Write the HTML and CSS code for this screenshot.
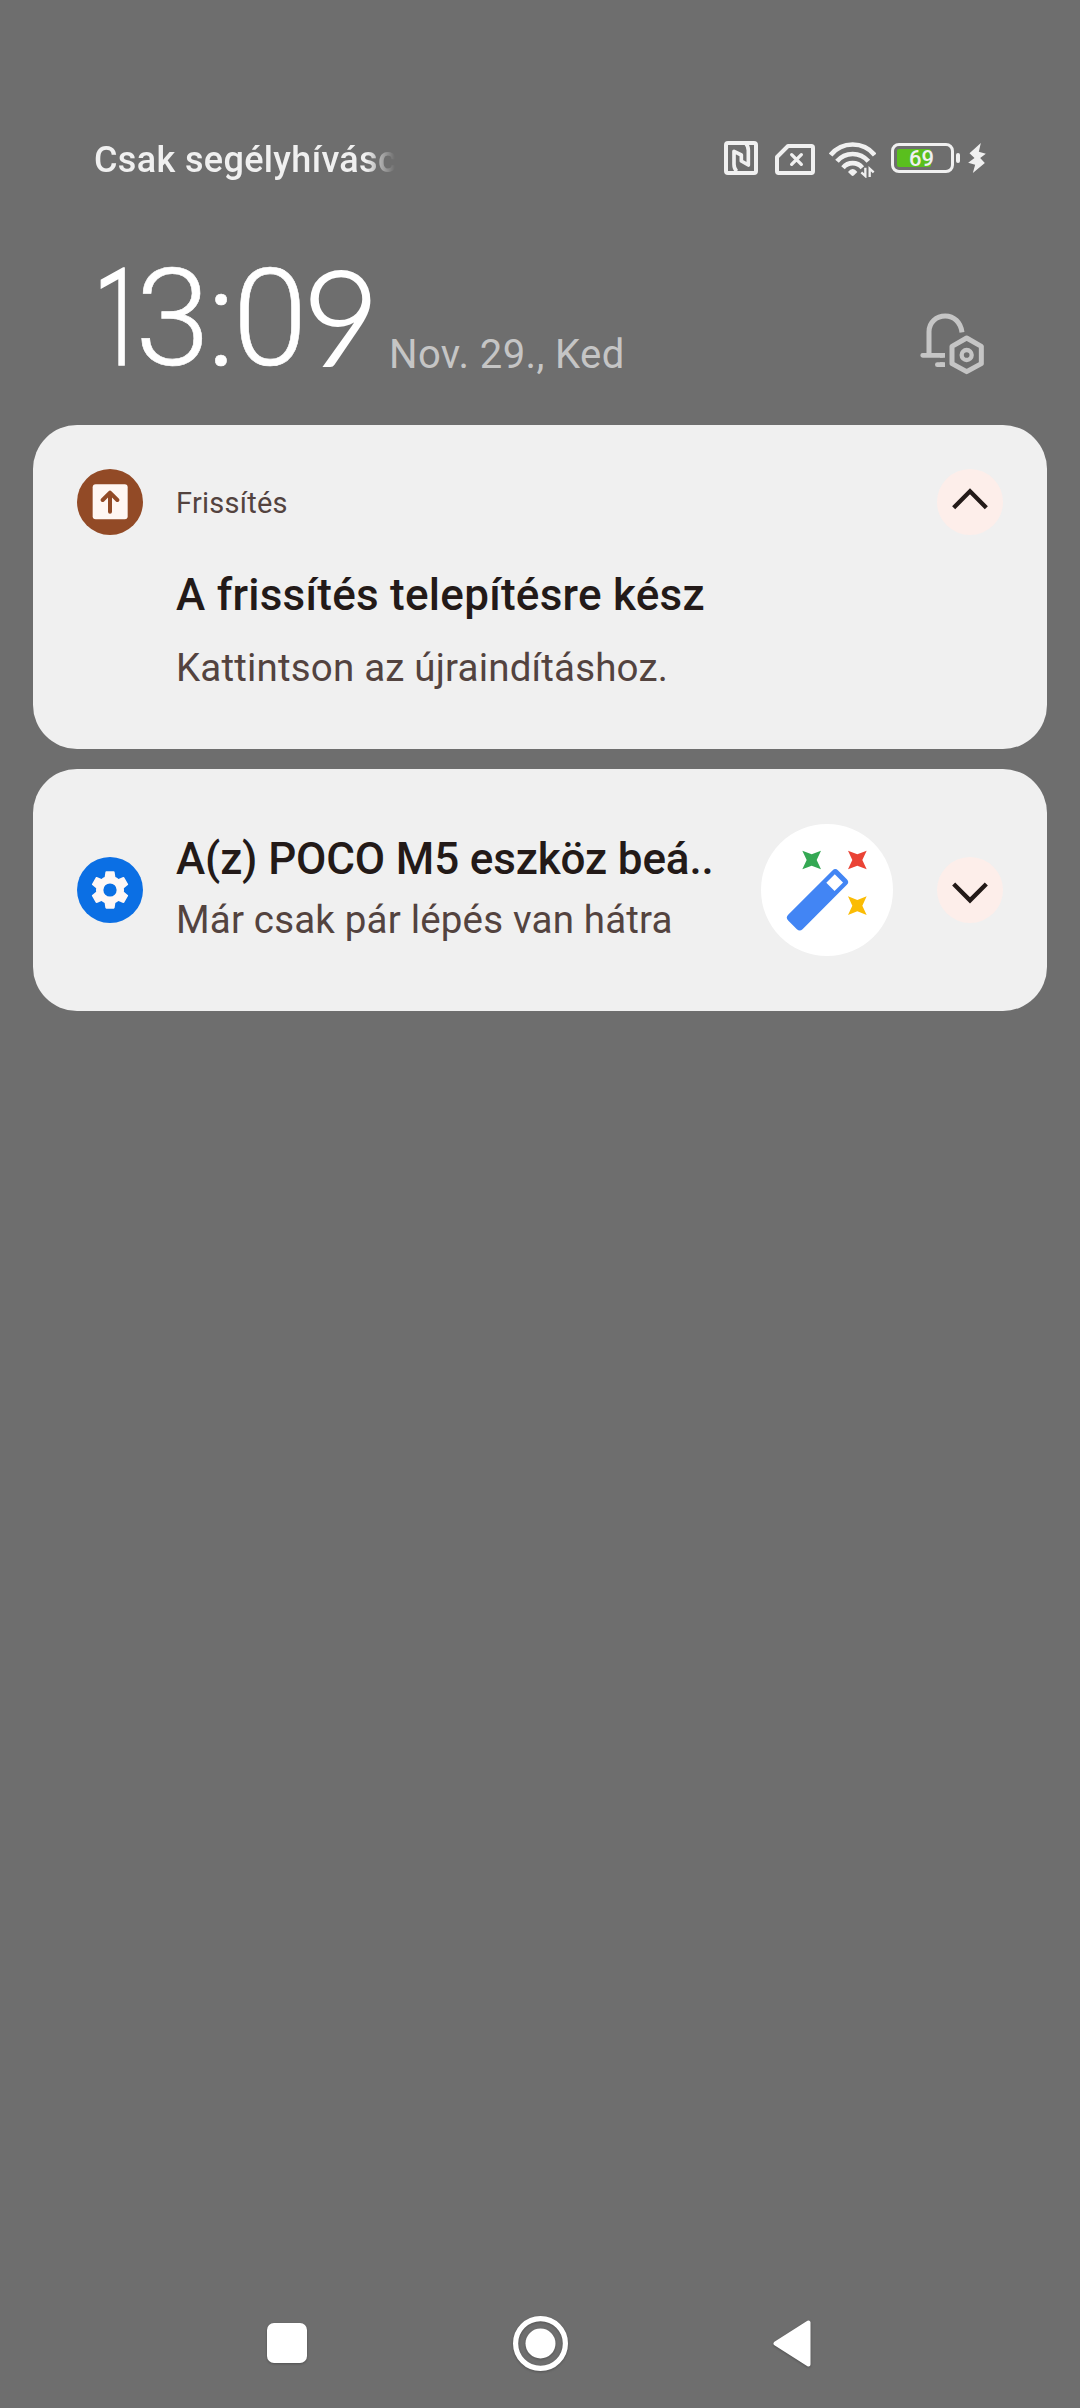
FILE: index.html
```html
<!DOCTYPE html>
<html lang="hu">
<head>
<meta charset="utf-8">
<title>Értesítések</title>
<link rel="stylesheet" href="styles.css">
</head>
<body>
<div class="screen">
  <header class="status">
    <div class="carrier">Csak segélyhívásc</div>
    <div class="status-icons">
      <svg class="nfc" viewBox="45 48 102 102" fill="none" stroke="#f0f0f0"><rect x="51" y="54" width="90" height="90" rx="6" stroke-width="12"/><path stroke-width="11" stroke-linejoin="round" d="M83 139Q75 131 75 118V79L97 90V108L118 120V76Q118 64 111 57"/></svg>
      <svg class="sim" viewBox="198 57 120 93" fill="none" stroke="#f0f0f0"><path stroke-width="12" stroke-linejoin="round" d="M237 63H307Q312 63 312 68V139Q312 144 307 144H209Q204 144 204 139V96Z"/><path stroke-width="10" stroke-linecap="round" d="M248 89L277 118M277 89L248 118"/></svg>
      <svg class="wifi" viewBox="361 48 141 108" fill="none" stroke="#f0f0f0"><path stroke-width="14" d="M366 87A85 85 0 0 1 498 87M385 106A61 61 0 0 1 479 106M403 125A38 38 0 0 1 461 125"/><path fill="#f0f0f0" stroke="none" d="M418 138Q432 120 446 138L436 148Q432 152 428 148Z"/><path stroke-width="7" d="M470 125V150L458 139M483 153V128L495 139"/></svg>
      <div class="battery"><span class="charge"></span><span class="level">69</span></div>
      <span class="nub"></span>
      <svg class="bolt" viewBox="775 54 53 90" fill="#f0f0f0"><path d="M813 54L779 85L794 99L775 113L796 119L789 144L825 114L811 99L828 86L807 80Z"/></svg>
    </div>
  </header>

  <div class="heading">
    <div class="clock"><span class="one">1</span><span class="three">3</span><span class="colon">:</span><span class="zero">0</span><span class="nine">9</span></div>
    <div class="date">Nov. 29., Ked</div>
    <svg class="bell" viewBox="60 38 195 186" fill="none" stroke="#c5c5c5"><path stroke-width="15" d="M87 162V94C87 66 109 47 136 47C162 47 182 66 186 96"/><path stroke-width="14" stroke-linecap="round" d="M68 165H127M112 193H127"/><path stroke-width="14" d="M120 165H135M120 193H135"/><path stroke-width="15" stroke-linejoin="round" d="M200 113L244 138V190L200 214L156 190V138Z"/><circle cx="200" cy="164" r="15" stroke-width="13"/></svg>
  </div>

  <main class="cards">
    <article class="card update">
      <svg class="app" viewBox="171 177 198 198"><circle cx="270" cy="276" r="99" fill="#924a26"/><rect x="218" y="223" width="105" height="105" rx="9" fill="#fff7f3"/><path d="M270 305V250M248 270L270 248L292 270" fill="none" stroke="#924a26" stroke-width="12" stroke-linecap="round" stroke-linejoin="round"/></svg>
      <div class="appname">Frissítés</div>
      <svg class="toggle" viewBox="111 177 198 198"><circle cx="210" cy="276" r="99" fill="#fdeeea"/><path d="M161 293L210 244L259 293" fill="none" stroke="#231a18" stroke-width="13"/></svg>
      <div class="body">
        <h2 class="title">A frissítés telepítésre kész</h2>
        <p class="text">Kattintson az újraindításhoz.</p>
      </div>
    </article>

    <article class="card setup">
      <svg class="app" viewBox="0 0 66 66"><circle cx="33" cy="33" r="33" fill="#0b6fe4"/><g transform="translate(9.7 9.7) scale(1.942)"><path fill="#fff7f5" d="M19.14 12.94c.04-.3.06-.61.06-.94 0-.32-.02-.64-.07-.94l2.03-1.58a.49.49 0 0 0 .12-.61l-1.92-3.32a.488.488 0 0 0-.59-.22l-2.39.96c-.5-.38-1.03-.7-1.62-.94l-.36-2.54a.484.484 0 0 0-.48-.41h-3.84c-.24 0-.43.17-.47.41l-.36 2.54c-.59.24-1.13.57-1.62.94l-2.39-.96c-.22-.08-.47 0-.59.22L2.74 8.87c-.12.21-.08.47.12.61l2.03 1.58c-.05.3-.09.63-.09.94s.02.64.07.94l-2.03 1.58a.49.49 0 0 0-.12.61l1.92 3.32c.12.22.37.29.59.22l2.39-.96c.5.38 1.03.7 1.62.94l.36 2.54c.05.24.24.41.48.41h3.84c.24 0 .44-.17.47-.41l.36-2.54c.59-.24 1.13-.56 1.62-.94l2.39.96c.22.08.47 0 .59-.22l1.92-3.32c.12-.22.07-.47-.12-.61l-2.01-1.58z"/><circle cx="12" cy="12" r="3.4" fill="#0b6fe4"/></g></svg>
      <div class="body">
        <h2 class="title">A(z) POCO M5 eszköz beá..</h2>
        <p class="text">Már csak pár lépés van hátra</p>
      </div>
      <svg class="wand" viewBox="93 41 396 396"><circle cx="291" cy="239" r="198" fill="#fff"/><rect x="156.500" y="238" width="212" height="61" rx="12" transform="rotate(-45 262.5 268.5)" fill="#4285f4"/><rect x="296" y="199.500" width="36" height="35" transform="rotate(-45 314 217)" fill="#fff"/><path fill="#34a853" d="M217 121L245 132L273 121L260 149L273 177L245 166L217 177L230 149Z"/><path fill="#ea4335" d="M354 121L382 132L410 121L397 149L410 177L382 166L354 177L367 149Z"/><path fill="#fbbc04" d="M354 258L382 269L410 258L397 286L410 314L382 303L354 314L367 286Z"/></svg>
      <svg class="toggle" viewBox="621 141 198 198"><circle cx="720" cy="240" r="99" fill="#fdeeea"/><path d="M671 222L720 271L769 222" fill="none" stroke="#231a18" stroke-width="13"/></svg>
    </article>
  </main>

  <nav class="nav">
    <svg class="recent" viewBox="0 0 40 40"><rect width="40" height="40" rx="7" fill="#fff"/></svg>
    <svg class="home" viewBox="0 0 55 55"><circle cx="27.500" cy="27.500" r="24.900" fill="none" stroke="#fff" stroke-width="5.200"/><circle cx="27.500" cy="27.500" r="15" fill="#fff"/></svg>
    <svg class="back" viewBox="0 0 38 47"><path d="M2.500 23.500L35.500 2.500V44.500Z" fill="#fff" stroke="#fff" stroke-width="4" stroke-linejoin="round"/></svg>
  </nav>
</div>
</body>
</html>
```
FILE: styles.css
```css
* { box-sizing: border-box; margin: 0; padding: 0; }
body { background: #6e6e6e; font-family: Roboto, sans-serif; }
svg { display: block; flex: none; }
.screen { width: 1080px; height: 2408px; display: flex; flex-direction: column; padding-top: 134px; overflow: hidden; }

.status { display: flex; justify-content: space-between; height: 50px; padding: 0 94px; }
.carrier { width: 301px; overflow: hidden; white-space: nowrap; font-size: 36px; font-weight: 500; line-height: 52px; letter-spacing: .35px; color: #f0f0f0;
  -webkit-mask-image: linear-gradient(to right, #000 272px, transparent 301px); mask-image: linear-gradient(to right, #000 272px, transparent 301px); }
.status-icons { display: flex; align-items: center; height: 48px; }
.nfc { width: 34px; height: 34px; margin-right: 17px; }
.sim { width: 40px; height: 31px; margin: 3px 14px 0 0; }
.wifi { width: 47px; height: 36px; margin: 3px 15px 0 0; }
.battery { position: relative; width: 63px; height: 30px; border: 3px solid #f0f0f0; border-radius: 8px; }
.charge { position: absolute; left: 3px; top: 3px; width: 34px; height: 18px; border-radius: 2px; background: #5abf1e; }
.level { position: absolute; left: 15px; top: 1px; font-size: 22px; line-height: 23px; font-weight: 500; color: #f0f0f0; }
.nub { width: 4px; height: 10px; margin: 0 8px 0 2px; border-radius: 2px; background: #f0f0f0; }
.bolt { width: 18px; height: 30px; }

.heading { display: flex; align-items: flex-start; height: 241px; padding: 0 95px 0 94px; white-space: nowrap; }
.clock { display: flex; width: 295px; margin-top: 60px; font-size: 134.5px; line-height: 150px; font-weight: 300; color: #fff; -webkit-text-stroke: .6px #fff; }
.clock span { display: flex; justify-content: center; flex: none; }
.clock .one { width: 41px; transform: scaleX(.68); transform-origin: 33px 50%; -webkit-text-stroke-width: 1.6px; }
.clock .three { width: 75px; }
.clock .colon { width: 22px; }
.clock .zero { width: 76px; }
.clock .nine { width: 66px; font-family: Lato, sans-serif; font-size: 132px; margin-top: -4px; -webkit-text-stroke-width: 2px; }
.date { flex: 1; margin-top: 145px; font-size: 40px; line-height: 51px; letter-spacing: .4px; color: #c5c5c5; }
.bell { width: 65px; height: 62px; margin-top: 129px; }

.cards { display: flex; flex-direction: column; gap: 20px; padding: 0 33px; }
.card { display: grid; column-gap: 33px; border-radius: 44px; background: #f0f0f0; padding: 0 44px; }
.update { grid-template-columns: 66px 1fr 66px; height: 324px; align-content: start; padding-top: 44px; }
.update .body { grid-column: 2; padding-top: 32px; }
.setup { grid-template-columns: 66px 1fr 143px 66px; height: 242px; align-items: center; }
.setup .body { min-width: 0; margin-right: -11px; padding-bottom: 5px; }
.app, .toggle { width: 66px; height: 66px; }
.wand { width: 132px; height: 132px; }
.appname { font-size: 29px; line-height: 68px; height: 66px; letter-spacing: .25px; color: #53433f; }
.title { font-size: 44px; line-height: 56px; font-weight: 500; letter-spacing: .26px; color: #231a18; white-space: nowrap; }
.text { font-size: 38.5px; line-height: 48px; letter-spacing: .18px; color: #53433f; white-space: nowrap; }
.update .text { margin-top: 21px; }
.setup .title { letter-spacing: -.14px; }
.setup .text { margin-top: 9px; }

.nav { display: flex; align-items: center; justify-content: space-between; width: 544px; height: 130px; margin: auto 0 0 267px; }
.nav svg { filter: drop-shadow(0 1px 1px rgba(0, 0, 0, .25)); }
.recent { width: 40px; height: 40px; }
.home { width: 55px; height: 55px; }
.back { width: 38px; height: 47px; }
```
